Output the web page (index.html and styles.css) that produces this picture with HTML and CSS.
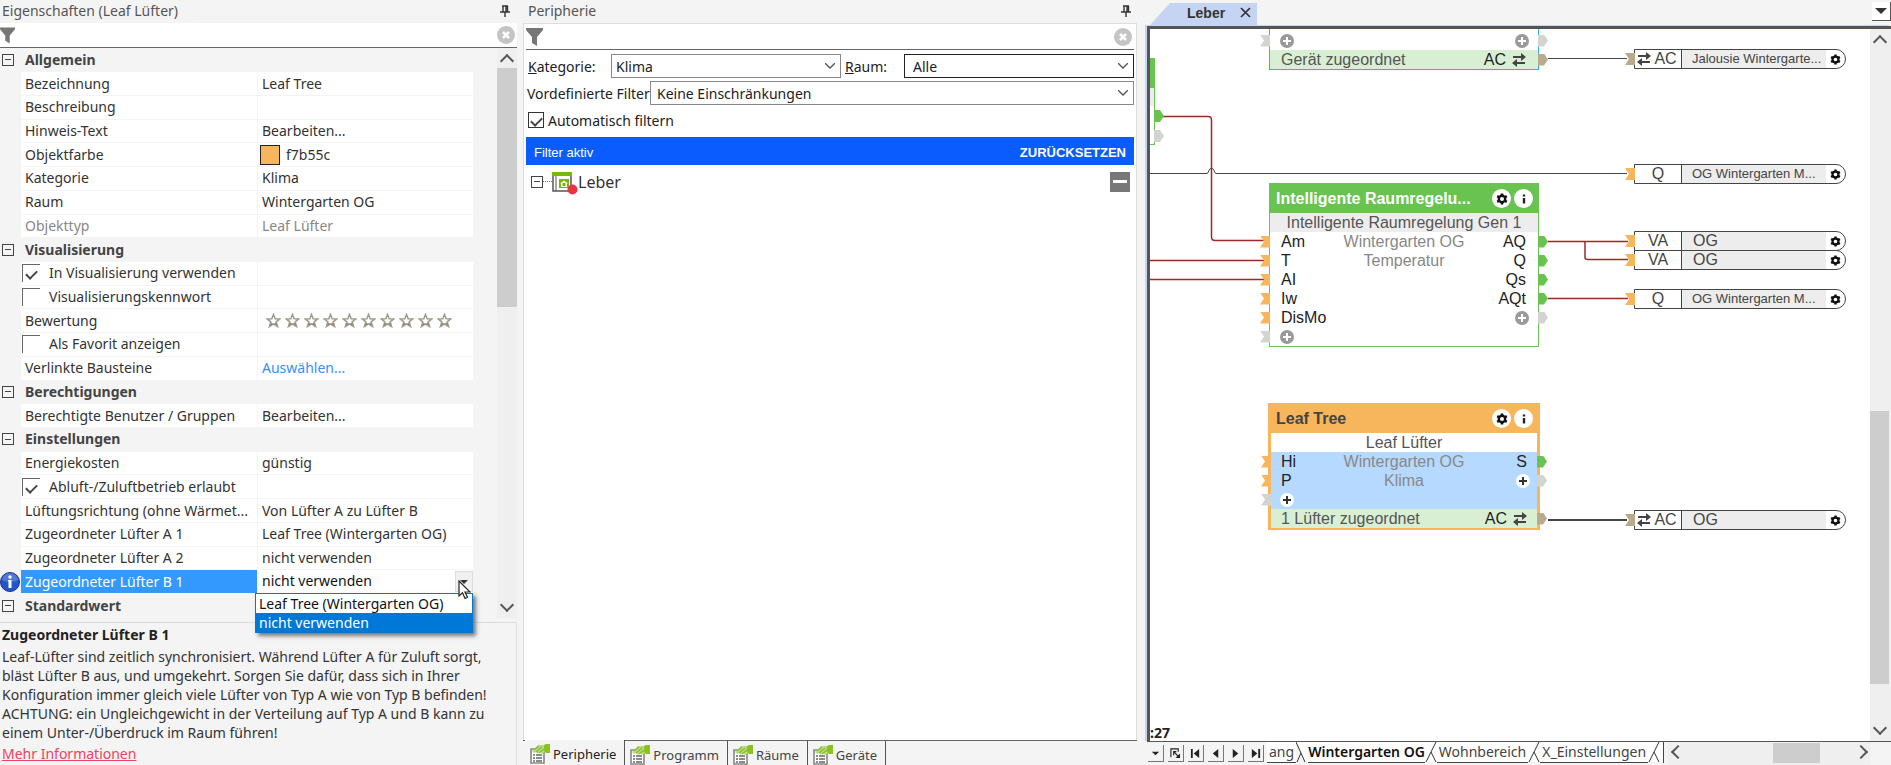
FILE: index.html
```html
<!DOCTYPE html>
<html lang="de">
<head>
    <meta charset="UTF-8">
    <title>Leber</title>
    <link rel="stylesheet" href="styles.css">
</head>
<body>
    <svg class="defs" aria-hidden="true">
        <symbol id="pin" viewBox="0 0 10 12"><path d="M2 1h6M3 1v6M6 1v6M7.500 1v6M0 7h10M5 7v5" stroke="#333" stroke-width="1.400" fill="none"/></symbol>
        <symbol id="funnel" viewBox="0 0 17 18"><path d="M0 0h17v2l-6 7v9l-5-3V9L0 2z" fill="#777"/></symbol>
        <symbol id="clear" viewBox="0 0 18 18"><circle cx="9" cy="9" r="9" fill="#c4c4c4"/><path d="M6 6l6 6M12 6l-6 6" stroke="#fff" stroke-width="2.500"/></symbol>
        <symbol id="star" viewBox="0 0 15 15"><path d="M7.500 1.500l1.700 4.200 4.600.2-3.600 2.900 1.300 4.700-4-2.600-4 2.600 1.300-4.700L1.200 5.900l4.600-.2z" fill="#fff" stroke="#a39c8c" stroke-width="1.600"/><path d="M4 13l1-3.500 2.500 1.500L10 9.500l1 3.500-3.500-2z" fill="#948c7a"/></symbol>
        <symbol id="gear" viewBox="0 0 12 12"><circle cx="6" cy="6" r="3.200" fill="none" stroke="#111" stroke-width="2.400"/><path d="M6 .5v2M6 9.500v2M1.200 3.200l1.800 1M9 7.800l1.800 1M1.200 8.800l1.800-1M9 4.200l1.800-1" stroke="#111" stroke-width="2.600"/></symbol>
        <symbol id="info" viewBox="0 0 12 12"><path d="M6 1.500v2M6 5v5.500" stroke="#222" stroke-width="2.400"/></symbol>
        <symbol id="plus" viewBox="0 0 14 14"><circle cx="7" cy="7" r="7" fill="var(--disc)"/><path d="M7 3v8M3 7h8" stroke="var(--cross)" stroke-width="2"/></symbol>
        <symbol id="swap" viewBox="0 0 14 14"><path d="M1 4h10M3 10h10" stroke="#444" stroke-width="2"/><path d="M9 0l5 4-5 4zM5 6l-5 4 5 4z" fill="#444"/></symbol>
        <symbol id="props" viewBox="0 0 20 20"><path d="M1 5h13v14H1z" fill="#fff" stroke="#888" stroke-width="1.600"/><path d="M3 11h2M6 11h6M3 14h2M6 14h6M3 17h2M6 17h6" stroke="#666" stroke-width="1.300"/><path d="M2 7l6-6h7v7l-3 2-2-2-2 2-2-2-2 1z" fill="#b9dc7c"/><path d="M4 6l5-4M6 8l6-5M9 9l5-4" stroke="#86b93a" stroke-width="1.200"/><path d="M14 1l2-1h4v9h-4l-2-2z" fill="#8cc220"/></symbol>
    </svg>

    <div class="app">
        <section class="properties">
            <header class="title-bar">
                <h2>Eigenschaften (Leaf Lüfter)</h2>
                <button class="icon-button" aria-label="Anheften"><svg width="10" height="12"><use href="#pin"/></svg></button>
            </header>
            <div class="filter">
                <svg width="15" height="17"><use href="#funnel"/></svg>
                <input type="text" aria-label="Eigenschaften filtern">
                <button class="icon-button" aria-label="Filter löschen"><svg width="18" height="18"><use href="#clear"/></svg></button>
            </div>

            <div class="grid-area">
                <table class="grid">
                    <colgroup><col class="col-gutter"><col class="col-name"><col></colgroup>
                    <tr class="group"><td><span class="toggle"></span></td><th colspan="2">Allgemein</th></tr>
                    <tr><td></td><td>Bezeichnung</td><td>Leaf Tree</td></tr>
                    <tr><td></td><td>Beschreibung</td><td></td></tr>
                    <tr><td></td><td>Hinweis-Text</td><td>Bearbeiten...</td></tr>
                    <tr><td></td><td>Objektfarbe</td><td><div class="color-value"><span class="swatch"></span>f7b55c</div></td></tr>
                    <tr><td></td><td>Kategorie</td><td>Klima</td></tr>
                    <tr><td></td><td>Raum</td><td>Wintergarten OG</td></tr>
                    <tr class="readonly"><td></td><td>Objekttyp</td><td>Leaf Lüfter</td></tr>
                    <tr class="group"><td><span class="toggle"></span></td><th colspan="2">Visualisierung</th></tr>
                    <tr><td></td><td><label class="check"><input type="checkbox" checked>In Visualisierung verwenden</label></td><td></td></tr>
                    <tr><td></td><td><label class="check"><input type="checkbox">Visualisierungskennwort</label></td><td></td></tr>
                    <tr>
                        <td></td><td>Bewertung</td>
                        <td>
                            <div class="stars">
                                <svg><use href="#star"/></svg><svg><use href="#star"/></svg><svg><use href="#star"/></svg><svg><use href="#star"/></svg><svg><use href="#star"/></svg><svg><use href="#star"/></svg><svg><use href="#star"/></svg><svg><use href="#star"/></svg><svg><use href="#star"/></svg><svg><use href="#star"/></svg>
                            </div>
                        </td>
                    </tr>
                    <tr><td></td><td><label class="check"><input type="checkbox">Als Favorit anzeigen</label></td><td></td></tr>
                    <tr><td></td><td>Verlinkte Bausteine</td><td><a class="choose" href="#">Auswählen...</a></td></tr>
                    <tr class="group"><td><span class="toggle"></span></td><th colspan="2">Berechtigungen</th></tr>
                    <tr><td></td><td>Berechtigte Benutzer / Gruppen</td><td>Bearbeiten...</td></tr>
                    <tr class="group"><td><span class="toggle"></span></td><th colspan="2">Einstellungen</th></tr>
                    <tr><td></td><td>Energiekosten</td><td>günstig</td></tr>
                    <tr><td></td><td><label class="check"><input type="checkbox" checked>Abluft-/Zuluftbetrieb erlaubt</label></td><td></td></tr>
                    <tr><td></td><td>Lüftungsrichtung (ohne Wärmet...</td><td>Von Lüfter A zu Lüfter B</td></tr>
                    <tr><td></td><td>Zugeordneter Lüfter A 1</td><td>Leaf Tree (Wintergarten OG)</td></tr>
                    <tr><td></td><td>Zugeordneter Lüfter A 2</td><td>nicht verwenden</td></tr>
                    <tr class="selected">
                        <td>
                            <svg class="row-info" width="20" height="20" viewBox="0 0 20 20"><circle cx="10" cy="10" r="9.500" fill="#2456c8" stroke="#17358c"/><path d="M2 8a8 7 0 0 1 16 0q-8 4-16 0z" fill="#6c93e6" opacity=".6"/><circle cx="10" cy="5" r="1.700" fill="#fff"/><path d="M8 8h3.500v8h-3V9.500H8z" fill="#fff"/></svg>
                        </td>
                        <td>Zugeordneter Lüfter B 1</td>
                        <td class="combo">
                            <div class="combo-value">nicht verwenden<button class="combo-button" aria-label="Liste öffnen"></button></div>
                            <ul class="combo-list" role="listbox" aria-label="Zugeordneter Lüfter B 1">
                                <li role="option">Leaf Tree (Wintergarten OG)</li>
                                <li role="option" class="active" aria-selected="true">nicht verwenden</li>
                            </ul>
                            <svg class="pointer" width="13" height="20" viewBox="0 0 13 20"><path d="M1 1v15l3.500-3.200L7 18.500l2.500-1.200L7 12h5z" fill="#fff" stroke="#222" stroke-width="1.200"/></svg>
                        </td>
                    </tr>
                    <tr class="group"><td><span class="toggle"></span></td><th colspan="2">Standardwert</th></tr>
                </table>
                <div class="scroll-y">
                    <button class="arrow up" aria-label="Nach oben"></button>
                    <div class="thumb"></div>
                    <button class="arrow down" aria-label="Nach unten"></button>
                </div>
            </div>

            <div class="help">
                <h3>Zugeordneter Lüfter B 1</h3>
                <p>Leaf-Lüfter sind zeitlich synchronisiert. Während Lüfter A für Zuluft sorgt,<br>bläst Lüfter B aus, und umgekehrt. Sorgen Sie dafür, dass sich in Ihrer<br>Konfiguration immer gleich viele Lüfter von Typ A wie von Typ B befinden!<br>ACHTUNG: ein Ungleichgewicht in der Verteilung auf Typ A und B kann zu<br>einem Unter-/Überdruck im Raum führen!</p>
                <a href="#">Mehr Informationen</a>
            </div>
        </section>

        <section class="periphery">
            <header class="title-bar">
                <h2>Peripherie</h2>
                <button class="icon-button" aria-label="Anheften"><svg width="10" height="12"><use href="#pin"/></svg></button>
            </header>
            <div class="periphery-body">
                <div class="filter">
                    <svg width="17" height="18"><use href="#funnel"/></svg>
                    <input type="text" aria-label="Peripherie filtern">
                    <button class="icon-button" aria-label="Filter löschen"><svg width="18" height="18"><use href="#clear"/></svg></button>
                </div>
                <form class="criteria">
                    <div class="criteria-pair">
                        <label for="category"><u>K</u>ategorie:</label>
                        <select id="category"><option>Klima</option></select>
                        <label for="room"><u>R</u>aum:</label>
                        <select id="room" class="focused"><option>Alle</option></select>
                    </div>
                    <div class="criteria-preset">
                        <label for="preset">Vordefinierte Filter</label>
                        <select id="preset"><option>Keine Einschränkungen</option></select>
                    </div>
                    <label class="auto"><input type="checkbox" checked>Automatisch filtern</label>
                </form>
                <div class="active-filter">
                    <span>Filter aktiv</span>
                    <button>ZURÜCKSETZEN</button>
                </div>
                <div class="tree">
                    <span class="toggle"></span><span class="branch"></span>
                    <svg width="26" height="23" viewBox="0 0 26 23"><path d="M1 1h18v18H1z" fill="#fff" stroke="#555" stroke-width="1.500"/><path d="M0 0h20v4H0z" fill="#76b900"/><path d="M4 4v15" stroke="#555"/><path d="M7 7h10v9H7z" fill="#76b900"/><path d="M12 8.500l4 3h-1V15H9v-3.500H8z" fill="#fff"/><path d="M10.500 11h3v3h-3z" fill="#76b900"/><circle cx="20.500" cy="17.500" r="5" fill="#e8334a"/></svg>
                    <span class="tree-name">Leber</span>
                    <button class="collapse" aria-label="Alle einklappen"></button>
                </div>
            </div>
            <nav class="dock-tabs">
                <a class="current" href="#"><svg width="20" height="20"><use href="#props"/></svg>Peripherie</a>
                <a href="#"><svg width="20" height="20"><use href="#props"/></svg>Programm</a>
                <a href="#"><svg width="20" height="20"><use href="#props"/></svg>Räume</a>
                <a href="#"><svg width="20" height="20"><use href="#props"/></svg>Geräte</a>
            </nav>
        </section>

        <section class="document">
            <header class="doc-tabs">
                <div class="doc-tab">
                    <span>Leber</span>
                    <button class="icon-button" aria-label="Schließen"><svg width="11" height="11" viewBox="0 0 11 11"><path d="M1 1l9 9M10 1l-9 9" stroke="#333" stroke-width="1.700"/></svg></button>
                </div>
                <button class="doc-list" aria-label="Dokumente"></button>
            </header>

            <div class="doc-frame">
                <div class="canvas">
                    <svg class="wires" width="720" height="711">
                        <path class="signal" d="M398 29.500h79M0 144.500h57q1 0 2-3 2.500-5 5 0 1 3 2 3H477"/>
                        <path class="analog" d="M13 87.500h45q3.500 0 3.500 3.500v117q0 3.500 3.500 3.500h49M0 231.500h114M0 250.500h114M398 212.500h80M434 212.500q1 0 1 3v13q0 2 3 2h40M398 269.500h80"/>
                        <path class="bus" d="M398 491h79"/>
                    </svg>

                    <div class="stub"><i class="port out green"></i><i class="port out"></i></div>

                    <article class="block device">
                        <div class="row"><i class="port in"></i><svg class="plus"><use href="#plus"/></svg><svg class="plus end"><use href="#plus"/></svg><i class="port out"></i></div>
                        <div class="row assigned"><span>Gerät zugeordnet</span><span class="end">AC</span><svg class="swap"><use href="#swap"/></svg><i class="port out tan"></i></div>
                    </article>

                    <article class="block control">
                        <header><h4>Intelligente Raumregelu...</h4><button aria-label="Einstellungen"><svg><use href="#gear"/></svg></button><button aria-label="Info"><svg><use href="#info"/></svg></button></header>
                        <div class="kind">Intelligente Raumregelung Gen 1</div>
                        <div class="row"><i class="port in orange"></i><span>Am</span><em>Wintergarten OG</em><span class="end">AQ</span><i class="port out green"></i></div>
                        <div class="row"><i class="port in orange"></i><span>T</span><em>Temperatur</em><span class="end">Q</span><i class="port out green"></i></div>
                        <div class="row"><i class="port in orange"></i><span>AI</span><span class="end">Qs</span><i class="port out green"></i></div>
                        <div class="row"><i class="port in orange"></i><span>Iw</span><span class="end">AQt</span><i class="port out green"></i></div>
                        <div class="row"><i class="port in orange"></i><span>DisMo</span><svg class="plus end"><use href="#plus"/></svg><i class="port out"></i></div>
                        <div class="row"><i class="port in"></i><svg class="plus"><use href="#plus"/></svg></div>
                    </article>

                    <article class="block leaf">
                        <header><h4>Leaf Tree</h4><button aria-label="Einstellungen"><svg><use href="#gear"/></svg></button><button aria-label="Info"><svg><use href="#info"/></svg></button></header>
                        <div class="kind">Leaf Lüfter</div>
                        <div class="row"><i class="port in orange"></i><span>Hi</span><em>Wintergarten OG</em><span class="end">S</span><i class="port out green"></i></div>
                        <div class="row"><i class="port in orange"></i><span>P</span><em>Klima</em><svg class="plus end"><use href="#plus"/></svg><i class="port out"></i></div>
                        <div class="row"><i class="port in"></i><svg class="plus"><use href="#plus"/></svg></div>
                        <div class="row assigned"><span>1 Lüfter zugeordnet</span><span class="end">AC</span><svg class="swap"><use href="#swap"/></svg><i class="port out tan"></i></div>
                    </article>

                    <div class="output blind"><i class="port in tan"></i><b><svg class="swap"><use href="#swap"/></svg>AC</b><span class="long">Jalousie Wintergarte...</span><svg class="cog"><use href="#gear"/></svg></div>
                    <div class="output motor"><i class="port in orange"></i><b>Q</b><span class="long">OG Wintergarten M...</span><svg class="cog"><use href="#gear"/></svg></div>
                    <div class="output va-first"><i class="port in orange"></i><b>VA</b><span>OG</span><svg class="cog"><use href="#gear"/></svg></div>
                    <div class="output va-second"><i class="port in orange"></i><b>VA</b><span>OG</span><svg class="cog"><use href="#gear"/></svg></div>
                    <div class="output valve"><i class="port in orange"></i><b>Q</b><span class="long">OG Wintergarten M...</span><svg class="cog"><use href="#gear"/></svg></div>
                    <div class="output fan"><i class="port in tan"></i><b><svg class="swap"><use href="#swap"/></svg>AC</b><span>OG</span><svg class="cog"><use href="#gear"/></svg></div>

                    <strong class="clock">:27</strong>
                </div>
                <div class="scroll-y">
                    <button class="arrow up" aria-label="Nach oben"></button>
                    <div class="thumb"></div>
                    <button class="arrow down" aria-label="Nach unten"></button>
                </div>
            </div>

            <footer class="sheets">
                <div class="sheet-buttons">
                    <button aria-label="Seitenliste"><svg viewBox="0 0 12 12"><path d="M2 4h8L6 8z"/></svg></button>
                    <button aria-label="Neue Seite"><svg viewBox="0 0 12 12"><path d="M1 10V1h8v3M4 4l5 5M4 8V4h3" fill="none" stroke="#222" stroke-width="1.200"/><path d="M11 6v5H6z"/></svg></button>
                    <button aria-label="Erste Seite"><svg viewBox="0 0 12 12"><path d="M1 1h2v10H1zM10 1v10L4 6z"/></svg></button>
                    <button aria-label="Vorherige Seite"><svg viewBox="0 0 12 12"><path d="M9 1v10L3 6z"/></svg></button>
                    <button aria-label="Nächste Seite"><svg viewBox="0 0 12 12"><path d="M3 1v10l6-5z"/></svg></button>
                    <button aria-label="Letzte Seite"><svg viewBox="0 0 12 12"><path d="M2 1v10l6-5zM9 1h2v10H9z"/></svg></button>
                </div>
                <nav class="sheet-tabs">
                    <a href="#">ang</a>
                    <svg class="slant" viewBox="0 0 12 21"><path d="M0 0h12v20H9z" fill="#fff" stroke="none"/><path d="M0 0l9 20M5 11L1 20"/></svg>
                    <a class="current" href="#">Wintergarten OG</a>
                    <svg class="slant" viewBox="0 0 12 21"><path d="M0 0h12v20H0z" fill="#fff" stroke="none"/><path d="M11 0L1 20M6 10l5 10"/></svg>
                    <a href="#">Wohnbereich</a>
                    <svg class="slant" viewBox="0 0 12 21"><path d="M0 0h12v20H0z" fill="#fff" stroke="none"/><path d="M11 0L1 20M6 10l5 10"/></svg>
                    <a href="#">X_Einstellungen</a>
                    <svg class="slant" viewBox="0 0 12 21"><path d="M0 0h12v20H0z" fill="#fff" stroke="none"/><path d="M11 0L1 20M6 10l5 10"/></svg>
                    <span class="next-sheet"></span>
                </nav>
                <div class="scroll-x">
                    <button class="arrow left" aria-label="Nach links"></button>
                    <div class="thumb"></div>
                    <button class="arrow right" aria-label="Nach rechts"></button>
                </div>
            </footer>
        </section>
    </div>
</body>
</html>
```
FILE: styles.css
```css
* {
    box-sizing: border-box;
}

body {
    margin: 0;
    font-family: "Noto Sans", "Open Sans", sans-serif;
    font-size: 14px;
    color: #333;
    background-color: #f4f4f4;
}

button, input, select {
    font: inherit;
    color: inherit;
    margin: 0;
    padding: 0;
    border: none;
    border-radius: 0;
    background: none;
}

h2, h3, h4, p, ul {
    margin: 0;
    padding: 0;
    font-size: inherit;
    list-style: none;
}

svg {
    display: block;
    flex: none;
}

.defs {
    position: absolute;
    width: 0;
    height: 0;
}

.app {
    display: grid;
    grid-template-columns: 517px 615px 1fr;
    column-gap: 6px;
    height: 100vh;
    overflow: hidden;
}

/* docked panels */
.properties, .periphery, .document {
    display: flex;
    flex-direction: column;
    min-width: 0;
    min-height: 0;
}

.title-bar {
    display: flex;
    align-items: center;
    justify-content: space-between;
    flex: none;
    height: 23px;
    padding: 0 7px 2px 2px;
    color: #555;
}

.title-bar h2 {
    font-weight: normal;
}

.filter {
    display: flex;
    align-items: center;
    flex: none;
    height: 25px;
    padding-right: 2px;
    background-color: #fff;
    border-bottom: 1px solid #666;
}

.filter input {
    flex: 1;
    min-width: 0;
    outline: none;
}

/* property grid */
.grid-area {
    display: flex;
    flex: 1;
    min-height: 0;
}

.grid {
    flex: 1;
    height: 100%;
    border-collapse: collapse;
    table-layout: fixed;
    margin-right: 23px;
}

.col-gutter {
    width: 20px;
}

.col-name {
    width: 237px;
}

.grid td, .grid th {
    height: 23px;
    padding: 0 0 0 4px;
    line-height: 20px;
    text-align: left;
    white-space: nowrap;
    background-color: #fff;
    border-bottom: 1px solid #f4f4f4;
    border-right: 1px solid #f4f4f4;
}

.grid td:first-child {
    padding: 0;
    background-color: #f4f4f4;
}

.grid .group th {
    background-color: #f4f4f4;
    color: #444;
}

.grid .readonly td {
    color: #888;
}

.toggle {
    display: block;
    width: 12px;
    height: 12px;
    margin-left: 2px;
    border: 1px solid #444;
    background: linear-gradient(#444, #444) center / 6px 1px no-repeat;
}

.color-value {
    display: flex;
    align-items: center;
    gap: 6px;
    margin-left: -2px;
}

.swatch {
    width: 20px;
    height: 20px;
    background-color: #f7b55c;
    border: 1px solid #222;
}

.check {
    display: flex;
    align-items: center;
    gap: 9px;
    margin-left: -3px;
}

.check input {
    appearance: none;
    display: grid;
    place-items: center;
    width: 18px;
    height: 18px;
    border-left: 1px solid #666;
    border-top: 1px solid #666;
}

.check input:checked::before, .auto input:checked::before {
    content: "";
    width: 9px;
    height: 5px;
    border-left: 2px solid #444;
    border-bottom: 2px solid #444;
    transform: rotate(-45deg);
}

.stars {
    display: flex;
    gap: 4px;
    margin-left: 4px;
}

.stars svg {
    width: 15px;
    height: 15px;
}

.choose {
    color: #3a8ef6;
    text-decoration: none;
}

.grid .selected td:nth-child(2) {
    background-color: #3399ff;
    color: #fff;
}

.grid .combo {
    position: relative;
    color: #111;
}

.combo-value {
    display: flex;
    justify-content: space-between;
}

.combo-button {
    width: 18px;
    height: 21px;
    background: url("data:image/svg+xml,%3Csvg xmlns='http://www.w3.org/2000/svg' width='8' height='4'%3E%3Cpath d='M0 0h8L4 4z' fill='%23333'/%3E%3C/svg%3E") center no-repeat #f0f0f0;
    border: 1px solid #ddd;
}

.combo-list {
    position: absolute;
    z-index: 1;
    top: 23px;
    left: -3px;
    right: 0;
    color: #111;
    line-height: 19px;
    background-color: #fff;
    border: 1px solid #0078d7;
    box-shadow: 3px 3px 4px rgba(0, 0, 0, 0.5);
}

.combo-list li {
    padding-left: 3px;
}

.combo-list .active {
    color: #fff;
    background-color: #0078d7;
}

.pointer {
    position: absolute;
    z-index: 2;
    top: 10px;
    right: 2px;
}

/* scroll bars */
.scroll-y {
    display: flex;
    flex-direction: column;
    width: 20px;
    background-color: #efefef;
}

.thumb {
    background-color: #cdcdcd;
}

.arrow {
    display: grid;
    place-items: center;
    width: 20px;
    height: 20px;
}

.arrow::before {
    content: "";
    width: 8px;
    height: 8px;
    border-left: 2px solid #555;
    border-top: 2px solid #555;
    transform: translateY(3px) rotate(45deg);
}

.arrow.down::before {
    transform: translateY(-3px) rotate(225deg);
}

.arrow.left::before {
    transform: rotate(-45deg);
}

.arrow.right::before {
    transform: rotate(135deg);
}

.scroll-y .down {
    margin-top: auto;
}

.grid-area .thumb {
    height: 42%;
}

.help {
    flex: none;
    margin-top: 4px;
    padding: 2px 0 2px 2px;
    line-height: 19px;
    white-space: nowrap;
    border-top: 1px solid #ddd;
    border-right: 1px solid #ddd;
}

.help h3 {
    color: #222;
    margin-bottom: 3px;
}

.help a {
    display: inline-block;
    margin-top: 2px;
    color: #f0415e;
}

/* periphery panel */
.periphery .title-bar {
    padding-left: 5px;
}

.periphery-body {
    flex: 1;
    margin-right: 1px;
    padding: 1px 2px 0 2px;
    background-color: #fff;
    border: 1px solid #ddd;
    border-bottom: none;
}

.criteria {
    display: grid;
    gap: 3px;
    padding-top: 4px;
    color: #222;
}

.criteria-pair {
    display: grid;
    grid-template-columns: 79px 1fr 55px 1fr;
    align-items: center;
    column-gap: 4px;
    padding-left: 2px;
}

.criteria-preset {
    display: grid;
    grid-template-columns: 121px 1fr;
    align-items: center;
    column-gap: 2px;
    padding-left: 1px;
    white-space: nowrap;
}

.criteria select {
    appearance: none;
    width: 100%;
    height: 24px;
    padding-left: 4px;
    border: 1px solid #888;
    background: url("data:image/svg+xml,%3Csvg xmlns='http://www.w3.org/2000/svg' width='10' height='6'%3E%3Cpath d='M0 0l5 5 5-5' fill='none' stroke='%23555' stroke-width='1.300'/%3E%3C/svg%3E") right 5px center no-repeat #fff;
}

.criteria .focused {
    padding-left: 8px;
    border-color: #222;
}

.criteria-preset select {
    padding-left: 6px;
}

.auto {
    display: flex;
    align-items: center;
    gap: 4px;
    height: 24px;
    padding-left: 2px;
}

.auto input {
    appearance: none;
    display: grid;
    place-items: center;
    width: 16px;
    height: 16px;
    border: 1px solid #333;
}

.active-filter {
    display: flex;
    align-items: center;
    justify-content: space-between;
    height: 28px;
    margin-top: 5px;
    padding: 2px 8px 0;
    font-family: "Liberation Sans", Arial, sans-serif;
    font-size: 13px;
    color: #fff;
    background-color: #0a5cff;
}

.active-filter button {
    font-weight: bold;
}

.tree {
    display: flex;
    align-items: center;
    padding: 3px 4px 0 3px;
    font-size: 16px;
}

.branch {
    width: 9px;
    border-top: 1px dotted #777;
}

.tree svg {
    margin-top: 4px;
}

.tree-name {
    flex: 1;
}

.collapse {
    width: 20px;
    height: 20px;
    background: linear-gradient(#fff, #fff) center / 14px 3px no-repeat #777;
}

.dock-tabs {
    display: flex;
    flex: none;
    height: 25px;
    margin-right: 1px;
    padding-left: 2px;
    font-size: 13px;
    border-top: 1px solid #666;
}

.dock-tabs a {
    display: flex;
    align-items: center;
    gap: 3px;
    padding: 3px 8px 0 5px;
    color: #444;
    text-decoration: none;
    border-right: 1px solid #555;
}

.dock-tabs .current {
    margin-top: -1px;
    color: #222;
    background-color: #f4f4f4;
}

/* document area */
.doc-tabs {
    display: flex;
    justify-content: space-between;
    align-items: flex-end;
    flex: none;
    height: 25px;
    padding-left: 6px;
}

.doc-tab {
    display: flex;
    align-items: center;
    gap: 15px;
    height: 22px;
    padding: 0 6px 3px 37px;
    font-family: "Liberation Sans", Arial, sans-serif;
    font-weight: bold;
    background-color: #c5d4f3;
    clip-path: polygon(20px 0, 100% 0, 100% 100%, 0 100%);
}

.doc-list {
    align-self: flex-start;
    width: 19px;
    height: 19px;
    margin-top: 2px;
    background: url("data:image/svg+xml,%3Csvg xmlns='http://www.w3.org/2000/svg' width='12' height='6'%3E%3Cpath d='M0 0h12l-6 6z' fill='%23333'/%3E%3C/svg%3E") center no-repeat #fff;
    border-right: 1px solid #555;
    border-bottom: 1px solid #555;
}

.doc-frame {
    display: flex;
    flex: 1;
    min-height: 0;
    border-left: 3px solid #555;
    border-top: 3px solid #555;
    border-bottom: 1px solid #555;
    box-shadow: -2px -1px 0 #c5d4f3;
    margin: 1px 0 0 3px;
}

.canvas {
    position: relative;
    flex: 1;
    overflow: hidden;
    background-color: #fff;
    font-family: "Liberation Sans", Arial, sans-serif;
    font-size: 16px;
}

.doc-frame .scroll-y {
    width: 21px;
}

.doc-frame .thumb {
    height: 273px;
    margin: auto 2px 37px 0;
}

.doc-frame .down {
    margin-top: 0;
}

/* canvas items */
.wires {
    position: absolute;
    left: 0;
    top: 0;
}

.wires path {
    fill: none;
}

.signal {
    stroke: #444;
}

.analog {
    stroke: #992b2b;
    stroke-width: 1.500px;
}

.bus {
    stroke: #444;
    stroke-width: 2px;
}

.port {
    position: absolute;
    width: 10px;
    height: 12px;
    background-color: #d3d3cf;
}

.port.in {
    right: 100%;
    clip-path: polygon(0 0, 100% 0, 100% 100%, 0 100%, 40% 50%);
}

.port.out {
    left: 100%;
    clip-path: polygon(0 0, 60% 0, 100% 50%, 60% 100%, 0 100%);
}

.port.orange {
    background-color: #f7b55c;
}

.port.green {
    background-color: #69c350;
}

.port.tan {
    background-color: #b9aa8e;
}

.stub {
    position: absolute;
    left: 0;
    top: 29px;
    display: flex;
    flex-direction: column;
    gap: 8px;
    width: 5px;
    height: 87px;
    padding-top: 52px;
    background: linear-gradient(#69c350 30px, #ededed 30px, #ededed 48px, #fff 48px);
    border-right: 1px solid #69c350;
    border-bottom: 1px solid #69c350;
}

.stub .port {
    position: relative;
    flex: none;
}

.block {
    --disc: #9a9a9a;
    --cross: #fff;
    position: absolute;
    left: 119px;
    width: 270px;
    background-color: #fff;
    border: 1px solid #69c350;
}

.device {
    top: -10px;
    padding-top: 11px;
    border-color: #2fb4d8;
}

.control {
    top: 154px;
}

.leaf {
    --disc: #fff;
    --cross: #333;
    left: 118px;
    top: 374px;
    width: 272px;
    background-color: #b6d9ff;
    border: 3px solid #f7b55c;
    border-bottom-width: 2px;
}

.block header {
    display: flex;
    align-items: center;
    gap: 3px;
    height: 29px;
    padding: 0 5px 0 6px;
    color: #fff;
    background-color: #69c350;
}

.leaf header {
    height: 27px;
    padding: 0 4px 2px 5px;
    color: #444;
    background-color: #f7b55c;
}

.block h4 {
    flex: 1;
    white-space: nowrap;
}

.block header button {
    display: grid;
    place-items: center;
    width: 19px;
    height: 19px;
    background-color: #fff;
    border-radius: 50%;
}

.block header svg {
    width: 12px;
    height: 12px;
}

.kind {
    height: 19px;
    line-height: 19px;
    text-align: center;
    color: #555;
    background-color: #ededed;
}

.leaf .kind {
    background-color: #fff;
}

.row {
    position: relative;
    display: flex;
    align-items: center;
    height: 19px;
    padding: 0 12px 0 11px;
    line-height: 19px;
    color: #222;
}

.leaf .row {
    padding: 0 10px 0 10px;
}

.row em {
    position: absolute;
    left: 0;
    right: 0;
    font-style: normal;
    text-align: center;
    color: #888;
}

.row .end {
    margin-left: auto;
}

.assigned {
    color: #555;
    background-color: #d8efd4;
}

.assigned .end {
    color: #222;
}

.plus {
    width: 14px;
    height: 14px;
    margin-left: -1px;
}

.plus.end {
    margin-right: -3px;
}

.swap {
    width: 14px;
    height: 14px;
    margin-left: 6px;
}

.output {
    position: absolute;
    left: 484px;
    display: grid;
    grid-template-columns: 47px 1fr 19px;
    align-items: center;
    width: 212px;
    height: 20px;
    line-height: 18px;
    color: #444;
    background-color: #fff;
    border: 1px solid #444;
    border-radius: 0 10px 10px 0;
}

.output b {
    display: flex;
    justify-content: center;
    font-weight: normal;
    border-right: 1px solid #444;
}

.output b .swap {
    margin: 2px 3px 0 -2px;
}

.output span {
    padding-left: 11px;
    background-color: #ededed;
}

.output .long {
    padding-left: 10px;
    font-size: 13px;
    line-height: 18px;
    white-space: nowrap;
}

.cog {
    width: 11px;
    height: 11px;
    margin-left: 4px;
}

.blind {
    top: 20px;
}

.motor {
    top: 135px;
}

.va-first {
    top: 202px;
}

.va-second {
    top: 221px;
}

.valve {
    top: 260px;
}

.fan {
    top: 481px;
}

.clock {
    position: absolute;
    left: 0;
    bottom: 0;
    font-family: "Noto Sans", sans-serif;
    font-size: 14px;
    line-height: 16px;
    color: #222;
}

/* sheet bar */
.sheets {
    display: flex;
    flex: none;
    height: 23px;
    padding-left: 4px;
}

.sheet-buttons {
    display: flex;
    gap: 4px;
    padding-top: 3px;
}

.sheet-buttons button {
    display: grid;
    place-items: center;
    width: 16px;
    height: 17px;
    border-right: 1px solid #777;
    border-bottom: 1px solid #777;
}

.sheet-buttons svg {
    width: 11px;
    height: 11px;
    fill: #222;
}

.sheet-tabs {
    display: flex;
    padding-left: 3px;
}

.sheet-tabs a {
    height: 21px;
    padding: 0 2px;
    line-height: 20px;
    white-space: nowrap;
    color: #444;
    text-decoration: none;
    background-color: #fff;
    border-bottom: 1px solid #444;
}

.sheet-tabs .current {
    padding: 0;
    color: #111;
    font-weight: 600;
}

.next-sheet {
    width: 4px;
    height: 21px;
    background-color: #fff;
    border-right: 1px solid #444;
}

.slant {
    width: 12px;
    height: 21px;
    fill: none;
    stroke: #333;
}

.scroll-x {
    display: flex;
    flex: 1;
    align-items: stretch;
    margin: 0 20px 0 4px;
    background-color: #efefef;
}

.scroll-x .thumb {
    width: 47px;
    margin: 1px 31px 2px auto;
}
```
